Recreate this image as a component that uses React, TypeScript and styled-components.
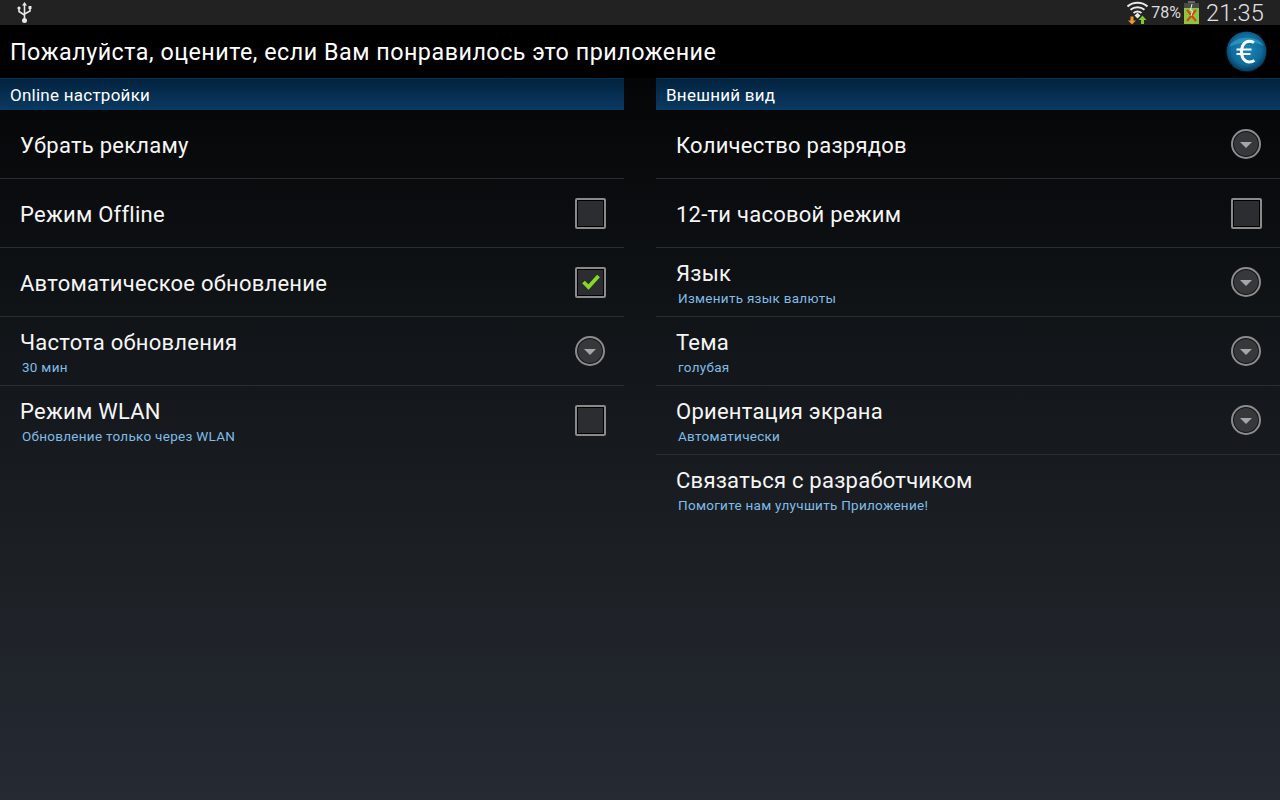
import React from "react";
import styled, { createGlobalStyle } from "styled-components";

const Global = createGlobalStyle`
  html, body { margin: 0; padding: 0; height: 100%; background: #000; }
  #root { height: 100%; }
`;
const Screen = styled.div`
  width: 1280px; height: 800px; overflow: hidden; display: flex; flex-direction: column;
  font-family: Roboto, "Liberation Sans", sans-serif; color: #fff;
`;
const StatusBar = styled.div`
  height: 25px; flex: none; display: flex; align-items: center; justify-content: space-between;
  background: #222; padding: 0 16px 0 16px; box-sizing: border-box;
`;
const StatusRight = styled.div`display: flex; align-items: center;`;
const Percent = styled.span`font-size: 16px; color: #dcdcdc; margin: 0 3px 0 3px; letter-spacing: 0;`;
const Clock = styled.span`font-size: 23.5px; color: #e4e4e4; margin-left: 7px; font-weight: 300; letter-spacing: .2px;`;
const ActionBar = styled.div`
  height: 53px; flex: none; background: #000; display: flex; align-items: center; justify-content: space-between;
  padding: 0 13px 0 10px;
`;
const AppTitle = styled.div`font-size: 23.3px; letter-spacing: .5px; color: #fff;`;
const Content = styled.div`
  flex: 1; display: grid; grid-template-columns: 624px 624px; column-gap: 32px;
  background: linear-gradient(180deg, #040506 0%, #13171b 40%, #1d2126 70%, #252a33 100%);
`;
const Column = styled.div`display: flex; flex-direction: column;`;
const SectionHeader = styled.div`
  height: 32px; box-sizing: border-box; display: flex; align-items: center; padding: 0 0 0 10px;
  font-size: 17px; letter-spacing: .25px;
  background: linear-gradient(180deg, #02233f 0%, #0b3a62 100%);
  border-top: 1px solid #063050;
`;
const Row = styled.div<{ $last?: boolean }>`
  height: 69px; box-sizing: border-box; display: flex; align-items: center; justify-content: space-between;
  padding: 0 18px ${(p) => (p.$last ? "2px" : "0")} 20px;
  border-bottom: ${(p) => (p.$last ? "none" : "1px solid #2b2d30")};
`;
const Texts = styled.div`display: flex; flex-direction: column; padding-top: 4px;`;
const Title = styled.div`font-size: 22px; line-height: 26px; letter-spacing: .24px; color: #f6f6f6;`;
const Sub = styled.div`font-size: 13.5px; line-height: 16px; margin: 3px 0 1px 2px; color: #80bce6; letter-spacing: .28px;`;
const Check = styled.div<{ $last?: boolean }>`
  width: 31px; height: 31px; box-sizing: border-box; border: 2px solid #8a8a8a; border-radius: 2px;
  background: #2c2d30; box-shadow: inset 0 0 0 1px #000; display: flex; align-items: center; justify-content: center;
  margin-bottom: ${(p) => (p.$last ? "-2px" : "0")};
`;
const Drop = styled.div`
  width: 30px; height: 30px; box-sizing: border-box; border: 2px solid #8c8c8c; border-radius: 50%;
  background: #37383b; box-shadow: inset 0 0 0 1px #111; display: flex; align-items: center; justify-content: center;
  margin-right: 1px;
`;
const Arrow = styled.div`
  width: 0; height: 0; border-left: 6px solid transparent; border-right: 6px solid transparent;
  border-top: 6px solid #a6a6a6; margin-top: 2px;
`;
const UsbIcon = () => (
  <svg width="18" height="22" viewBox="0 0 18 22" style={{ display: "block" }}>
    <g stroke="#e8e8e8" strokeWidth="1.6" fill="none">
      <path d="M8.5 3V19" />
      <path d="M3 7V9.5L8.5 13" />
      <path d="M14 6V9L8.5 12" />
    </g>
    <path d="M8.5 0L11 3.5H6Z" fill="#e8e8e8" />
    <circle cx="8.5" cy="18.5" r="2.5" fill="#e8e8e8" />
    <circle cx="3" cy="6" r="1.6" fill="#e8e8e8" />
    <rect x="12.5" y="4" width="3" height="3" fill="#e8e8e8" />
  </svg>
);
const WifiIcon = () => (
  <svg width="21" height="24" viewBox="0 0 21 24" style={{ display: "block" }}>
    <g stroke="#e8e8e8" strokeWidth="2" fill="none">
      <path d="M0.500 5.500C6 0.500 15 0.500 20.500 5.500" />
      <path d="M3.500 8.800C7.500 5.500 13.500 5.500 17.500 8.800" />
      <path d="M6.500 12C9 10.200 12 10.200 14.500 12" />
    </g>
    <path d="M10.500 11.800L13.500 14.500L10.500 17.500L7.500 14.500Z" fill="#e8e8e8" />
    <path d="M6.500 15.500V19.500H9L5 23.500L1 19.500H3.500V15.500Z" fill="#e89a2c" />
    <path d="M14 23V19H11.500L15.500 14.500L19.500 19H17V23Z" fill="#7fc92a" />
  </svg>
);
const BatteryIcon = () => (
  <svg width="15" height="23" viewBox="0 0 15 23" style={{ display: "block" }}>
    <rect x="4" y="0" width="7" height="2" fill="#666" />
    <rect x="0" y="2" width="15" height="5" fill="#4a4a4a" />
    <rect x="0" y="7" width="15" height="16" fill="#8cc63e" />
    <path d="M3 9L12 20M12 9L3 20" stroke="#d8401e" strokeWidth="2" />
    <path d="M8 3L6.500 9L8.500 10L7 15" stroke="#eee" strokeWidth="1" fill="none" />
  </svg>
);
const EuroLogo = () => (
  <svg width="41" height="41" viewBox="0 0 41 41" style={{ display: "block" }}>
    <defs>
      <radialGradient id="eu" cx="50%" cy="45%" r="58%">
        <stop offset="0%" stopColor="#1b86b8" />
        <stop offset="65%" stopColor="#0f6c9c" />
        <stop offset="100%" stopColor="#06304c" />
      </radialGradient>
    </defs>
    <circle cx="20.500" cy="20.500" r="20" fill="url(#eu)" />
    <path d="M3 16C8 5 30 3 38 15C30 10 12 11 3 16Z" fill="#3fa9d2" opacity=".55" />
    <path d="M28 11.500C22 8.500 16 11 15.500 20.500C15.500 30 22 33 28.500 29.500" stroke="#fff" strokeWidth="3" fill="none" />
    <path d="M10.500 18.500H25.500M10.500 23H24.500" stroke="#fff" strokeWidth="2.200" />
  </svg>
);
const CheckMark = () => (
  <svg width="20" height="18" viewBox="0 0 20 18" style={{ display: "block" }}>
    <path d="M2.500 9L7.500 14L17.500 3" stroke="#86d926" strokeWidth="3.800" fill="none" />
  </svg>
);

type Item = { title: string; sub?: string; ctl?: "off" | "on" | "drop" };
const left: Item[] = [
  { title: "Убрать рекламу" },
  { title: "Режим Offline", ctl: "off" },
  { title: "Автоматическое обновление", ctl: "on" },
  { title: "Частота обновления", sub: "30 мин", ctl: "drop" },
  { title: "Режим WLAN", sub: "Обновление только через WLAN", ctl: "off" },
];
const right: Item[] = [
  { title: "Количество разрядов", ctl: "drop" },
  { title: "12-ти часовой режим", ctl: "off" },
  { title: "Язык", sub: "Изменить язык валюты", ctl: "drop" },
  { title: "Тема", sub: "голубая", ctl: "drop" },
  { title: "Ориентация экрана", sub: "Автоматически", ctl: "drop" },
  { title: "Связаться с разработчиком", sub: "Помогите нам улучшить Приложение!" },
];
const Settings = ({ header, items }: { header: string; items: Item[] }) => (
  <Column>
    <SectionHeader>{header}</SectionHeader>
    {items.map((it, i) => {
      const last = i === items.length - 1;
      return (
        <Row key={it.title} $last={last}>
          <Texts>
            <Title>{it.title}</Title>
            {it.sub && <Sub>{it.sub}</Sub>}
          </Texts>
          {it.ctl === "drop" && <Drop><Arrow /></Drop>}
          {it.ctl === "off" && <Check $last={last} />}
          {it.ctl === "on" && <Check><CheckMark /></Check>}
        </Row>
      );
    })}
  </Column>
);
export default function App() {
  return (
    <Screen>
      <Global />
      <StatusBar>
        <UsbIcon />
        <StatusRight>
          <WifiIcon />
          <Percent>78%</Percent>
          <BatteryIcon />
          <Clock>21:35</Clock>
        </StatusRight>
      </StatusBar>
      <ActionBar>
        <AppTitle>Пожалуйста, оцените, если Вам понравилось это приложение</AppTitle>
        <EuroLogo />
      </ActionBar>
      <Content>
        <Settings header="Online настройки" items={left} />
        <Settings header="Внешний вид" items={right} />
      </Content>
    </Screen>
  );
}
